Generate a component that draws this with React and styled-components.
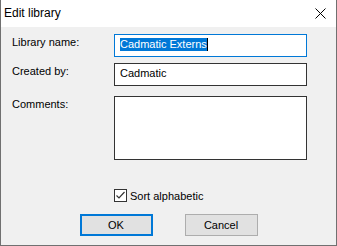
import React from 'react';
import styled, { createGlobalStyle } from 'styled-components';

const GlobalStyle = createGlobalStyle`
    html, body {
        margin: 0;
        padding: 0;
        background: #f0f0f0;
    }
`;

const Window = styled.div`
    box-sizing: border-box;
    width: 337px;
    height: 246px;
    display: flex;
    flex-direction: column;
    border: 1px solid #707070;
    border-top: none;
    background: #f0f0f0;
    font-family: "Liberation Sans", Arial, sans-serif;
    font-size: 11px;
    color: #000;
`;

const TitleBar = styled.div`
    height: 27px;
    flex: none;
    display: flex;
    align-items: center;
    justify-content: space-between;
    background: #fff;
    padding-left: 3px;
    padding-right: 10px;
`;

const Title = styled.span`
    font-size: 12px;
    margin-top: -1px;
`;

const CloseIcon = () => (
    <svg width="11" height="11" viewBox="0 0 11 11">
        <path d="M0.5 0.5 L10.5 10.5 M10.5 0.5 L0.5 10.5" stroke="#000" strokeWidth="1" fill="none" />
    </svg>
);

const Client = styled.div`
    flex: 1;
    display: flex;
    flex-direction: column;
    padding: 7px 0 0 11px;
`;

const Form = styled.div`
    display: grid;
    grid-template-columns: 102px 193px;
`;

const Label = styled.label`
    padding-top: ${props => props.offset || 2}px;
    line-height: 13px;
`;

const TextBox = styled.div`
    box-sizing: border-box;
    height: ${props => props.tall ? 64 : 23}px;
    margin-bottom: ${props => props.gap || 0}px;
    border: 1px solid ${props => props.focused ? '#0078d7' : '#333'};
    background: #fff;
    padding: 3px 0 0 5px;
    font-size: 11px;
    line-height: 13px;
    display: flex;
    align-items: flex-start;
`;

const Selected = styled.span`
    background: #0078d7;
    color: #fff;
`;

const Caret = styled.span`
    display: inline-block;
    width: 1px;
    height: 13px;
    background: #000;
`;

const CheckRow = styled.div`
    grid-column: 2;
    display: flex;
    align-items: center;
    gap: 3px;
    margin-top: 29px;
    height: 13px;
`;

const CheckBox = styled.span`
    box-sizing: border-box;
    width: 13px;
    height: 13px;
    border: 1px solid #333;
    background: #fff;
    display: flex;
    align-items: center;
    justify-content: center;
`;

const Buttons = styled.div`
    display: flex;
    justify-content: center;
    gap: 32px;
    margin: 12px 0 0 -11px;
`;

const Button = styled.button`
    box-sizing: border-box;
    width: 73px;
    height: 22px;
    padding: 0;
    background: #e1e1e1;
    border: ${props => props.primary ? '2px solid #0078d7' : '1px solid #adadad'};
    font-family: inherit;
    font-size: 11px;
    color: #000;
`;

const App = () => (
    <Window>
        <GlobalStyle />
        <TitleBar>
            <Title>Edit library</Title>
            <CloseIcon />
        </TitleBar>
        <Client>
            <Form>
                <Label offset={2}>Library name:</Label>
                <TextBox focused gap={6}>
                    <Selected>Cadmatic Externs</Selected>
                    <Caret />
                </TextBox>
                <Label offset={0}>Created by:</Label>
                <TextBox gap={10}>Cadmatic</TextBox>
                <Label offset={0}>Comments:</Label>
                <TextBox tall />
                <CheckRow>
                    <CheckBox>
                        <svg width="11" height="11" viewBox="0 0 11 11">
                            <path d="M1.5 5.5 L4 8 L9.5 2" stroke="#333" strokeWidth="1.2" fill="none" />
                        </svg>
                    </CheckBox>
                    <span>Sort alphabetic</span>
                </CheckRow>
            </Form>
            <Buttons>
                <Button primary>OK</Button>
                <Button>Cancel</Button>
            </Buttons>
        </Client>
    </Window>
);

export default App;
